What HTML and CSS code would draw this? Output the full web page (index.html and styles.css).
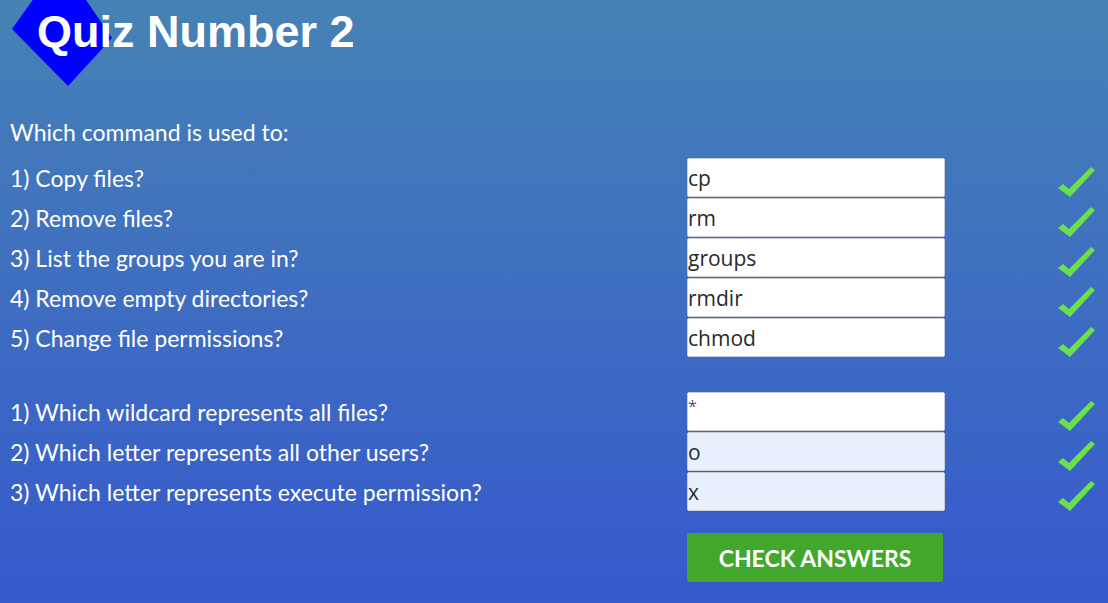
FILE: index.html
```html
<!DOCTYPE html>
<html>
<head>
<meta charset="utf-8">
<title>Quiz Number 2</title>
<link rel="stylesheet" href="styles.css">
</head>
<body>
<header class="header">
  <svg class="diamond" width="130" height="100" viewBox="0 0 130 100"><polygon points="12,29 60,-38 112,38 68,86" fill="#0000ff"/></svg>
  <h1 class="title">Quiz Number 2</h1>
</header>
<main class="quiz">
  <div class="row heading"><span class="label">Which command is used to:</span></div>
  <div class="group">
    <div class="row"><span class="label">1) Copy files?</span><input class="answer" value="cp"><svg class="check" viewBox="0 0 40 32"><path d="M2 22 L7 18 L13 23 L35 1 L39 4 L14 31 Z"/></svg></div>
    <div class="row"><span class="label">2) Remove files?</span><input class="answer" value="rm"><svg class="check" viewBox="0 0 40 32"><path d="M2 22 L7 18 L13 23 L35 1 L39 4 L14 31 Z"/></svg></div>
    <div class="row"><span class="label">3) List the groups you are in?</span><input class="answer" value="groups"><svg class="check" viewBox="0 0 40 32"><path d="M2 22 L7 18 L13 23 L35 1 L39 4 L14 31 Z"/></svg></div>
    <div class="row"><span class="label">4) Remove empty directories?</span><input class="answer" value="rmdir"><svg class="check" viewBox="0 0 40 32"><path d="M2 22 L7 18 L13 23 L35 1 L39 4 L14 31 Z"/></svg></div>
    <div class="row"><span class="label">5) Change file permissions?</span><input class="answer" value="chmod"><svg class="check" viewBox="0 0 40 32"><path d="M2 22 L7 18 L13 23 L35 1 L39 4 L14 31 Z"/></svg></div>
  </div>
  <div class="group second">
    <div class="row"><span class="label">1) Which wildcard represents all files?</span><input class="answer star" value="*"><svg class="check" viewBox="0 0 40 32"><path d="M2 22 L7 18 L13 23 L35 1 L39 4 L14 31 Z"/></svg></div>
    <div class="row"><span class="label">2) Which letter represents all other users?</span><input class="answer filled" value="o"><svg class="check" viewBox="0 0 40 32"><path d="M2 22 L7 18 L13 23 L35 1 L39 4 L14 31 Z"/></svg></div>
    <div class="row"><span class="label">3) Which letter represents execute permission?</span><input class="answer filled" value="x"><svg class="check" viewBox="0 0 40 32"><path d="M2 22 L7 18 L13 23 L35 1 L39 4 L14 31 Z"/></svg></div>
  </div>
  <div class="actions"><button class="btn">CHECK ANSWERS</button></div>
</main>
</body>
</html>
```
FILE: styles.css
```css
html, body {
  margin: 0;
  height: 100%;
}
body {
  background: linear-gradient(to bottom, #4682b4 0%, #3f6fc0 45%, #3659cd 100%);
  font-family: "Lato", "Liberation Sans", sans-serif;
  color: #ffffff;
  overflow: hidden;
}
.header {
  position: relative;
  height: 111px;
}
.diamond {
  position: absolute;
  left: 0;
  top: 0;
}
.title {
  position: relative;
  margin: 0;
  padding: 6px 0 0 37px;
  font-family: "Liberation Sans", Arial, sans-serif;
  font-weight: bold;
  font-size: 45px;
  line-height: normal;
  color: #ffffff;
}
.quiz {
  padding-left: 10px;
}
.row {
  display: grid;
  grid-template-columns: 677px 258px 111px 40px;
  align-items: center;
  height: 40px;
}
.heading {
  margin-bottom: 6px;
}
.label {
  font-size: 23px;
  line-height: 40px;
  padding-top: 1px;
}
.answer {
  box-sizing: border-box;
  height: 39px;
  margin: 0;
  padding: 0;
  border: 1px solid #c8cdd6;
  border-radius: 2px;
  background: #ffffff;
  font-family: "Open Sans", "Noto Sans", sans-serif;
  font-size: 21px;
  color: #2a2a2a;
  outline: none;
}
.answer.star {
  font-size: 16px;
  padding-bottom: 12px;
  color: #4a5870;
}
.answer.filled {
  background: #e8f0fe;
}
.check {
  grid-column: 4;
  width: 40px;
  height: 32px;
  margin-top: 8px;
  fill: #6ae04a;
}
.second {
  margin-top: 34px;
}
.actions {
  padding-left: 677px;
  margin-top: 22px;
}
.btn {
  width: 256px;
  height: 49px;
  border: none;
  border-radius: 2px;
  background: #42a72d;
  color: #ffffff;
  font-family: "Lato", "Liberation Sans", sans-serif;
  font-weight: bold;
  font-size: 23px;
  padding: 0;
}
```
